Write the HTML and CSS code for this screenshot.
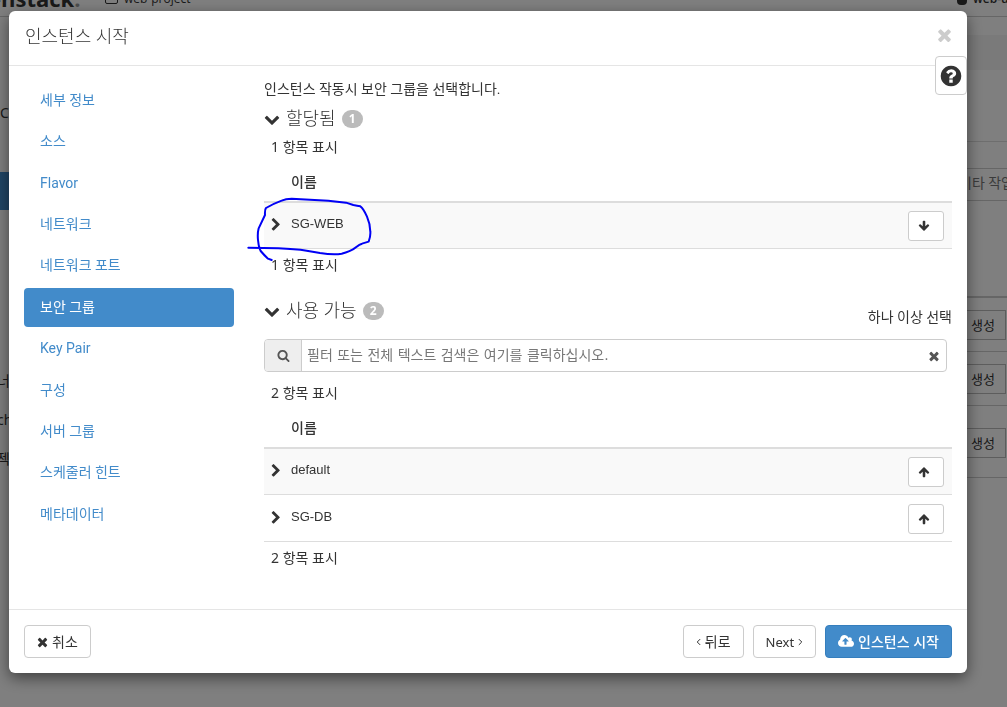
FILE: index.html
```html
<!DOCTYPE html>
<html lang="ko">

<head>
<meta charset="UTF-8" />
<title>인스턴스 시작</title>
<link rel="stylesheet" href="styles.css">
</head>
<body>

  <!-- shared icons -->
  <svg class="sprite" aria-hidden="true">
    <symbol id="i-times" viewBox="0 0 1408 1792"><path d="M1298 1322q0 40-28 68l-136 136q-28 28-68 28t-68-28l-294-294-294 294q-28 28-68 28t-68-28l-136-136q-28-28-28-68t28-68l294-294-294-294q-28-28-28-68t28-68l136-136q28-28 68-28t68 28l294 294 294-294q28-28 68-28t68 28l136 136q28 28 28 68t-28 68l-294 294 294 294q28 28 28 68z"/></symbol>
    <symbol id="i-down" viewBox="0 0 1792 1792"><path d="M1683 808l-742 741q-19 19-45 19t-45-19l-742-741q-19-19-19-45.500t19-45.500l166-165q19-19 45-19t45 19l531 531 531-531q19-19 45-19t45 19l166 165q19 19 19 45.500t-19 45.500z"/></symbol>
    <symbol id="i-right" viewBox="0 0 1280 1792"><path d="M1107 979l-742 742q-19 19-45 19t-45-19l-166-166q-19-19-19-45t19-45l531-531-531-531q-19-19-19-45t19-45l166-166q19-19 45-19t45 19l742 742q19 19 19 45t-19 45z"/></symbol>
    <symbol id="i-arrow" viewBox="0 0 1792 1792"><path d="M1675 971q0 51-37 90l-75 75q-38 38-91 38-54 0-90-38l-294-293v704q0 52-37.500 84.500t-90.500 32.500h-128q-53 0-90.500-32.500t-37.500-84.500v-704l-294 293q-36 38-90 38t-90-38l-75-75q-38-38-38-90 0-53 38-91l651-651q35-37 90-37 54 0 91 37l651 651q37 39 37 91z"/></symbol>
    <symbol id="i-search" viewBox="0 0 1792 1792"><path d="M1216 832q0-185-131.500-316.500t-316.500-131.500-316.500 131.500-131.500 316.500 131.500 316.500 316.500 131.500 316.500-131.500 131.500-316.500zm512 832q0 52-38 90t-90 38q-54 0-90-38l-343-342q-179 124-399 124-143 0-273.500-55.500t-225-150-150-225-55.500-273.500 55.500-273.500 150-225 225-150 273.500-55.500 273.500 55.500 225 150 150 225 55.500 273.500q0 220-124 399l343 343q37 37 37 90z"/></symbol>
    <symbol id="i-help" viewBox="0 0 1792 1792"><path d="M1024 1376v-192q0-14-9-23t-23-9h-192q-14 0-23 9t-9 23v192q0 14 9 23t23 9h192q14 0 23-9t9-23zm256-672q0-88-55.500-163t-138.500-116-170-41q-243 0-371 213-15 24 8 42l132 100q7 6 19 6 16 0 25-12 53-68 86-92 34-24 86-24 48 0 85.500 26t37.500 59q0 38-20 61t-68 45q-63 28-115.500 86.500t-52.500 125.500v36q0 14 9 23t23 9h192q14 0 23-9t9-23q0-19 21.500-49.500t54.500-49.500q32-18 49-28.500t46-35 44.500-48 28-60.500 12.500-81zm384 192q0 209-103 385.500t-279.500 279.500-385.500 103-385.500-103-279.500-279.500-103-385.500 103-385.500 279.500-279.500 385.500-103 385.500 103 279.500 279.500 103 385.500z"/></symbol>
    <symbol id="i-cloud" viewBox="0 0 1920 1792"><path d="M1280 864q0-14-9-23l-352-352q-9-9-23-9t-23 9l-351 351q-10 12-10 24 0 14 9 23t23 9h224v352q0 13 9.500 22.500t22.500 9.500h192q13 0 22.500-9.500t9.500-22.500v-352h224q13 0 22.500-9.500t9.500-22.500zm640 288q0 159-112.500 271.500t-271.500 112.500h-1088q-185 0-316.500-131.500t-131.500-316.500q0-130 70-240t188-165q-2-30-2-43 0-212 150-362t362-150q156 0 285.500 87t188.500 231q71-62 166-62 106 0 181 75t75 181q0 76-41 138 130 31 213.500 135.500t83.500 238.500z"/></symbol>
    <symbol id="i-angle" viewBox="0 0 6 10"><path d="M1 1.500L4.500 5L1 8.500" fill="none" stroke="currentColor" stroke-width="1.200"/></symbol>
  </svg>

  <!-- dashboard behind the dialog -->
  <div class="page">
    <header class="topbar">
      <span class="brand">enstack<span class="dot">.</span></span>
      <span class="project"><i class="folder"></i>web-project</span>
      <span class="user"><i class="person"></i>web-user</span>
    </header>
    <div class="columns">
      <nav class="side">
        <div class="side-group">Co</div>
        <div class="side-active"></div>
        <div class="side-item">너</div>
        <div class="side-item">ch</div>
        <div class="side-item">젝</div>
      </nav>
      <div class="content">
        <div class="crumb"></div>
        <div class="toolbar"></div>
        <div class="filter"></div>
        <div class="more">기타 작업</div>
        <div class="list-head"></div>
        <div class="list-row"><button type="button">생성</button></div>
        <div class="list-row"><button type="button">생성</button></div>
        <div class="list-row tall"><button type="button">생성</button></div>
      </div>
    </div>
  </div>

  <div class="overlay">
    <div class="modal" role="dialog" aria-labelledby="title">
      <div class="modal-header">
        <h1 id="title">인스턴스 시작</h1>
        <button type="button" class="close" aria-label="닫기"><svg class="icon"><use href="#i-times"/></svg></button>
      </div>
      <button type="button" class="help" aria-label="도움말"><svg class="icon"><use href="#i-help"/></svg></button>

      <div class="modal-body">
        <nav class="steps">
          <a href="#">세부 정보</a>
          <a href="#">소스</a>
          <a href="#">Flavor</a>
          <a href="#">네트워크</a>
          <a href="#">네트워크 포트</a>
          <a href="#" class="active">보안 그룹</a>
          <a href="#">Key Pair</a>
          <a href="#">구성</a>
          <a href="#">서버 그룹</a>
          <a href="#">스케줄러 힌트</a>
          <a href="#">메타데이터</a>
        </nav>

        <div class="main">
          <p class="intro">인스턴스 작동시 보안 그룹을 선택합니다.</p>

          <section class="allocated">
            <h2><svg class="icon"><use href="#i-down"/></svg>할당됨 <span class="badge">1</span></h2>
            <p class="count">1 항목 표시</p>
            <table>
              <thead>
                <tr><th class="expand"></th><th>이름</th><th class="action"></th></tr>
              </thead>
              <tbody>
                <tr class="odd">
                  <td class="expand"><svg class="icon"><use href="#i-right"/></svg></td>
                  <td>SG-WEB</td>
                  <td class="action"><button type="button" class="btn move" aria-label="SG-WEB 제거"><svg class="icon flip"><use href="#i-arrow"/></svg></button></td>
                </tr>
              </tbody>
            </table>
            <p class="count after">1 항목 표시</p>
            <!-- pen mark round SG-WEB -->
            <svg class="pen" viewBox="15 375 390 204" aria-hidden="true">
              <path d="M25 533L115 535Q165 537 200 542L240 549Q280 555 305 551Q335 543 350 530Q358 523 366 521L386 515Q392 500 391 485Q390 460 381 440Q370 415 361 409Q352 407 340 405L318 398L265 392L155 386Q137 386 125 392Q98 402 78 414Q74 418 75 435L56 475Q52 490 54 510Q56 532 62 543Q72 555 84 566L95 570"/>
            </svg>
          </section>

          <section class="available">
            <div class="section-head">
              <h2><svg class="icon"><use href="#i-down"/></svg>사용 가능 <span class="badge">2</span></h2>
              <span class="hint">하나 이상 선택</span>
            </div>
            <div class="search">
              <label for="filter"><svg class="icon"><use href="#i-search"/></svg></label>
              <input type="text" id="filter" aria-label="필터" placeholder="필터 또는 전체 텍스트 검색은 여기를 클릭하십시오.">
              <button type="button" class="clear" aria-label="지우기"><svg class="icon"><use href="#i-times"/></svg></button>
            </div>
            <p class="count">2 항목 표시</p>
            <table>
              <thead>
                <tr><th class="expand"></th><th>이름</th><th class="action"></th></tr>
              </thead>
              <tbody>
                <tr class="odd">
                  <td class="expand"><svg class="icon"><use href="#i-right"/></svg></td>
                  <td>default</td>
                  <td class="action"><button type="button" class="btn move" aria-label="default 추가"><svg class="icon"><use href="#i-arrow"/></svg></button></td>
                </tr>
                <tr>
                  <td class="expand"><svg class="icon"><use href="#i-right"/></svg></td>
                  <td>SG-DB</td>
                  <td class="action"><button type="button" class="btn move" aria-label="SG-DB 추가"><svg class="icon"><use href="#i-arrow"/></svg></button></td>
                </tr>
              </tbody>
            </table>
            <p class="count after">2 항목 표시</p>
          </section>
        </div>
      </div>

      <div class="modal-footer">
        <button type="button" class="btn cancel"><svg class="icon"><use href="#i-times"/></svg>취소</button>
        <button type="button" class="btn"><svg class="icon angle flip"><use href="#i-angle"/></svg>뒤로</button>
        <button type="button" class="btn next">Next<svg class="icon angle"><use href="#i-angle"/></svg></button>
        <button type="button" class="btn primary"><svg class="icon cloud"><use href="#i-cloud"/></svg>인스턴스 시작</button>
      </div>
    </div>
  </div>

</body>
</html>
```
FILE: styles.css
```css
* {
  box-sizing: border-box;
}

body {
  margin: 0;
  height: 100vh;
  overflow: hidden;
  background: white;
  color: #333;
  font-family: Roboto, "Noto Sans CJK KR", sans-serif;
  font-size: 14px;
  line-height: 20px;
}

h1, h2, p {
  margin: 0;
  font-weight: normal;
}

button, input {
  font-family: "Noto Sans", "Noto Sans CJK KR", sans-serif;
  font-size: 14px;
  line-height: 20px;
  color: #333;
}

button {
  cursor: pointer;
}

.sprite {
  display: none;
}

.icon {
  flex: none;
  width: 12px;
  height: 12px;
  fill: currentColor;
}

.flip {
  transform: rotate(180deg);
}

/* page behind */
.topbar {
  display: flex;
  align-items: flex-end;
  height: 17px;
  overflow: hidden;
  border-bottom: 1px solid #ccc;
  white-space: nowrap;
}

.brand {
  width: 109px;
  margin-left: -12px;
  font-family: "Open Sans", sans-serif;
  font-size: 22px;
  font-weight: bold;
  line-height: 36px;
}

.dot {
  color: #999;
}

.project, .user {
  display: flex;
  align-items: center;
  gap: 6px;
  padding-bottom: 7px;
  margin-left: 8px;
  font-family: "Open Sans", sans-serif;
  font-size: 12px;
}

.project {
  flex: 1;
}

.user {
  width: 50px;
  font-weight: 600;
}

.folder {
  width: 13px;
  height: 10px;
  border: 1px solid #333;
  border-radius: 2px;
}

.person {
  flex: none;
  width: 10px;
  height: 12px;
  border-radius: 4px;
  background: #333;
}

.columns {
  display: flex;
  justify-content: space-between;
}

.side {
  width: 60px;
  padding-top: 86px;
  font-family: "Noto Sans", "Noto Sans CJK KR", sans-serif;
}

.side-active {
  height: 38px;
  margin: 49px 0 161px;
  background: #428bca;
}

.side-item {
  height: 39px;
  margin-left: -3px;
}

.content {
  width: 60px;
  padding-top: 18px;
  overflow: hidden;
}

.crumb {
  height: 35px;
  background: #f5f5f5;
}

.toolbar {
  height: 72px;
  border-bottom: 1px solid #ddd;
}

.filter {
  height: 27px;
  border-bottom: 1px solid #ccc;
}

.more {
  height: 32px;
  padding: 4px 12px;
  border-bottom: 1px solid #ccc;
  color: #777;
  white-space: nowrap;
}

.list-head {
  height: 97px;
  border-bottom: 2px solid #ccc;
}

.list-row {
  height: 54px;
  padding: 12px 1px 0 0;
  border-bottom: 1px solid #ccc;
}

.list-row.tall {
  height: 72px;
  padding-top: 22px;
}

.list-row button {
  width: 100%;
  height: 30px;
  padding: 0 10px;
  border: 1px solid #bbb;
  background: white;
  font-size: 13px;
  text-align: right;
}

/* dialog */
.overlay {
  position: fixed;
  inset: 0;
  padding: 11px 40px 34px 9px;
  background: rgba(0,0,0,0.5);
}

.modal {
  position: relative;
  background: white;
  border-radius: 6px;
  box-shadow: 0 5px 15px rgba(0,0,0,0.5);
}

.modal-header {
  display: flex;
  justify-content: space-between;
  align-items: flex-start;
  padding: 14px 15px 16px 16px;
  border-bottom: 1px solid #e5e5e5;
}

h1 {
  font-size: 18px;
  font-weight: 300;
  line-height: 24px;
}

.close {
  padding: 0;
  border: none;
  background: none;
  color: #ccc;
}

.close .icon {
  display: block;
  width: 15px;
  height: 20px;
}

.help {
  position: absolute;
  top: 45px;
  right: 0;
  display: flex;
  align-items: center;
  justify-content: center;
  width: 32px;
  height: 39px;
  padding: 0;
  border: 1px solid #ccc;
  border-radius: 4px;
  background: white;
}

.help .icon {
  width: 24px;
  height: 24px;
}

.modal-body {
  display: flex;
  gap: 30px;
  padding: 0 15px;
}

.steps {
  display: flex;
  flex-direction: column;
  gap: 2px;
  width: 210px;
  padding: 15px 0 75px;
}

.steps a {
  flex: 1;
  padding: 9px 16px;
  border-radius: 4px;
  color: #428bca;
  text-decoration: none;
}

.steps a.active {
  background: #428bca;
  color: white;
}

.main {
  flex: 1;
  padding: 13px 0 41px;
}

.allocated {
  position: relative;
  margin-top: 10px;
}

h2 {
  display: flex;
  align-items: center;
  gap: 6px;
  font-size: 18px;
  font-weight: 300;
}

h2 .icon {
  width: 16px;
  height: 16px;
}

.badge {
  min-width: 20px;
  padding: 0 7px;
  border-radius: 10px;
  background: #bbb;
  color: white;
  font-family: "Open Sans", sans-serif;
  font-size: 12px;
  font-weight: bold;
  line-height: 18px;
}

.count {
  margin: 8px 0 7px;
  padding-left: 7px;
  font-family: "Noto Sans", "Noto Sans CJK KR", sans-serif;
}

.count.after {
  margin: 6px 0 0;
}

table {
  width: 100%;
  border-collapse: separate;
  border-spacing: 0;
}

th {
  height: 39px;
  padding: 8px 0 9px;
  border-bottom: 2px solid #ddd;
  font-weight: 500;
  text-align: left;
}

td {
  height: 46px;
  padding: 6px 0 9px;
  border-bottom: 1px solid #ddd;
  font-family: "Liberation Sans", "Noto Sans CJK KR", sans-serif;
  font-size: 13px;
}

tr + tr td {
  height: 47px;
}

.expand {
  width: 27px;
  padding-left: 7px;
}

.expand .icon {
  display: block;
  width: 10px;
  height: 14px;
}

td.action {
  width: 44px;
  padding: 8px 8px 7px 0;
}

.odd td {
  background: #f9f9f9;
}

.pen {
  position: absolute;
  top: 86px;
  left: -19px;
  width: 130px;
  height: 68px;
  fill: none;
  stroke: #0000f5;
  stroke-width: 6;
  stroke-linecap: round;
  stroke-linejoin: round;
  pointer-events: none;
}

.available {
  margin-top: 26px;
}

.available .count:not(.after) {
  margin-top: 11px;
}

.section-head {
  display: flex;
  justify-content: space-between;
  align-items: flex-start;
}

.hint {
  padding-top: 6px;
}

.search {
  display: flex;
  height: 33px;
  margin: 12px 5px 0 0;
  overflow: hidden;
  border: 1px solid #ccc;
  border-radius: 4px;
}

.search label {
  display: flex;
  align-items: center;
  justify-content: center;
  width: 37px;
  border-right: 1px solid #ccc;
  background: #eee;
  color: #555;
}

.search label .icon {
  width: 13px;
  height: 13px;
}

.search input {
  flex: 1;
  padding: 0 5px 2px;
  border: none;
  outline: none;
  font-family: "DejaVu Sans", "Noto Sans CJK KR", sans-serif;
}

.search input::placeholder {
  color: #777;
}

.clear {
  display: flex;
  align-items: center;
  width: 18px;
  padding: 0;
  border: none;
  background: none;
  color: #555;
}

.clear .icon {
  width: 12px;
  height: 14px;
}

.btn {
  display: flex;
  align-items: center;
  justify-content: center;
  gap: 4px;
  height: 33px;
  padding: 0 12px;
  border: 1px solid #ccc;
  border-radius: 4px;
  background: white;
}

.btn.move {
  width: 36px;
  height: 30px;
  padding: 0 4px 0 0;
  border-radius: 3px;
}

.modal-footer {
  display: flex;
  gap: 9px;
  padding: 15px;
  border-top: 1px solid #e5e5e5;
}

.cancel {
  margin-right: auto;
}

.cancel .icon {
  width: 11px;
  height: 14px;
}

.next {
  font-size: 13px;
}

.icon.angle {
  width: 5px;
  height: 10px;
}

.icon.cloud {
  width: 16px;
  height: 15px;
}

.btn.primary {
  border-color: #357ebd;
  background: #428bca;
  color: white;
  font-weight: 500;
}
```
